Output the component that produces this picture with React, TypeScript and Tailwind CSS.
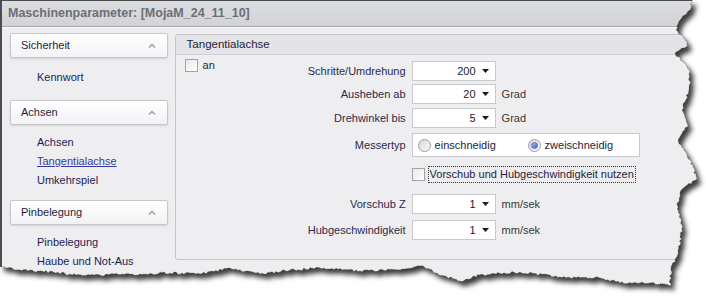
import React from 'react';

// torn paper edge, right side then bottom
const rightEdge: [number, number][] = [
  [692, 0], [690, 10], [680, 20], [676, 30], [688, 42], [686, 47], [675, 53], [684, 63], [690, 72],
  [689, 90], [682, 110], [688, 125], [678, 140], [690, 160], [697, 178], [680, 192], [677, 205],
  [682, 225], [680, 245], [676, 258], [671, 268], [670, 286],
];
const bottomEdge: [number, number][] = [
  [650, 283], [620, 283], [600, 278], [560, 277], [520, 272], [480, 275], [460, 281], [445, 276],
  [420, 266], [400, 270], [360, 271], [320, 268], [290, 270], [260, 274], [230, 268], [200, 274],
  [170, 273], [140, 274], [100, 275], [70, 274], [40, 271], [20, 270], [0, 267],
];

function tornPath() {
  let seed = 7;
  const rnd = () => {
    seed = (seed * 16807) % 2147483647;
    return (seed / 2147483647) * 2 - 1;
  };
  const pts = [...rightEdge, ...bottomEdge];
  let d = 'M0 0 L692 0';
  for (let i = 1; i < pts.length; i++) {
    const [x0, y0] = pts[i - 1];
    const [x1, y1] = pts[i];
    const len = Math.hypot(x1 - x0, y1 - y0);
    const steps = Math.max(1, Math.round(len / 2));
    const nx = -(y1 - y0) / len;
    const ny = (x1 - x0) / len;
    for (let s = 1; s <= steps; s++) {
      const t = s / steps;
      const j = s === steps ? 0 : rnd() * 1.2;
      d += ` L${(x0 + (x1 - x0) * t + nx * j).toFixed(1)} ${(y0 + (y1 - y0) * t + ny * j).toFixed(1)}`;
    }
  }
  return d + ' Z';
}

function Caret() {
  return (
    <svg width="8" height="5" viewBox="0 0 8 5">
      <polyline points="1,4.5 4,1.5 7,4.5" fill="none" stroke="#9a9ba0" strokeWidth="1.3" />
    </svg>
  );
}

function NavHeader({ label }: { label: string }) {
  return (
    <div className="h-[25px] flex items-center justify-between pl-[10px] pr-[11px] bg-gradient-to-b from-white to-[#f3f3f6] border border-[#c6c7cc] rounded-[2px] shadow-[0_1px_2px_rgba(0,0,0,0.12)] text-[#1e1e3c]">
      <span>{label}</span>
      <Caret />
    </div>
  );
}

function NavItem({ label, active }: { label: string; active?: boolean }) {
  return (
    <div className={`h-[19px] flex items-center pl-[27px] ${active ? 'text-[#3838a0] underline' : 'text-[#1c1c54]'}`}>
      {label}
    </div>
  );
}

function Combo({ value }: { value: string }) {
  return (
    <div className="w-[84px] h-[20px] flex items-center bg-white border border-[#c8c9ce]">
      <span className="flex-1 text-right text-[#1a1a1a]">{value}</span>
      <span className="w-[19px] flex justify-center">
        <svg width="7" height="4" viewBox="0 0 7 4">
          <polygon points="0,0 7,0 3.5,4" fill="#1a1a1a" />
        </svg>
      </span>
    </div>
  );
}

function CheckBox() {
  return <span className="w-[13px] h-[13px] border border-[#a2a3a8] bg-gradient-to-br from-[#e8e8ea] to-white shrink-0" />;
}

function Radio({ checked }: { checked?: boolean }) {
  return (
    <span className="w-[13px] h-[13px] rounded-full border border-[#9c9da2] bg-gradient-to-br from-[#d6d7da] to-[#fbfbfc] flex items-center justify-center shrink-0">
      {checked && <span className="w-[7px] h-[7px] rounded-full bg-gradient-to-br from-[#a9c4f2] to-[#3b63c4] border border-[#4d6fb8]" />}
    </span>
  );
}

function Row({ label, mt, children }: { label: string; mt: string; children: React.ReactNode }) {
  return (
    <div className={`flex items-center ${mt}`}>
      <span className="w-[115px] pr-[6px] text-right text-[#2a2a4c]">{label}</span>
      {children}
    </div>
  );
}

export default function App() {
  const d = tornPath();
  return (
    <div className="relative w-[706px] h-[296px] bg-white overflow-hidden font-['Liberation_Sans',Arial,sans-serif] text-[11px]">
      <div className="w-[700px] h-[292px] flex flex-col bg-[#eeeef1] border-l-2 border-t border-[#4e4f52]">
        <div className="h-[26px] flex items-center pl-[6px] bg-gradient-to-b from-[#dcdde0] to-[#d2d3d7] border-b border-[#a6a7ac] text-[12.5px] font-bold text-[#6c6f75]">
          Maschinenparameter: [MojaM_24_11_10]
        </div>
        <div className="h-px bg-white/70" />
        <div className="flex pt-[5px]">
          <div className="w-[159px] ml-[8px]">
            <NavHeader label="Sicherheit" />
            <div className="pt-[10px] h-[42px]">
              <NavItem label="Kennwort" />
            </div>
            <NavHeader label="Achsen" />
            <div className="pt-[8px] h-[75px]">
              <NavItem label="Achsen" />
              <NavItem label="Tangentialachse" active />
              <NavItem label="Umkehrspiel" />
            </div>
            <NavHeader label="Pinbelegung" />
            <div className="pt-[8px]">
              <NavItem label="Pinbelegung" />
              <NavItem label="Haube und Not-Aus" />
            </div>
          </div>
          <div className="ml-[7px] w-[530px] h-[226px] mt-[1px] border border-[#c5c6cb] rounded-[3px] flex flex-col">
            <div className="h-[20px] flex items-center pl-[11px] bg-[#e3e4e8] border-b border-[#cfd0d4] text-[#1e1e3a] text-[11.5px]">
              Tangentialachse
            </div>
            <div className="flex pl-[9px]">
              <div className="w-[112px] pt-[4px] flex items-start gap-[5px] text-[#1e1e3a]">
                <CheckBox />
                <span className="leading-[13px]">an</span>
              </div>
              <div className="flex flex-col">
                <Row label="Schritte/Umdrehung" mt="mt-[6px]">
                  <Combo value="200" />
                </Row>
                <Row label="Ausheben ab" mt="mt-[3px]">
                  <Combo value="20" />
                  <span className="ml-[6px] text-[#3c3530]">Grad</span>
                </Row>
                <Row label="Drehwinkel bis" mt="mt-[4px]">
                  <Combo value="5" />
                  <span className="ml-[6px] text-[#3c3530]">Grad</span>
                </Row>
                <Row label="Messertyp" mt="mt-[5px]">
                  <div className="w-[228px] h-[24px] bg-white border border-[#c8c9ce] flex items-center pl-[5px] text-[#1e1e3a]">
                    <div className="w-[110px] flex items-center gap-[4px]">
                      <Radio />
                      <span>einschneidig</span>
                    </div>
                    <div className="flex items-center gap-[4px]">
                      <Radio checked />
                      <span>zweischneidig</span>
                    </div>
                  </div>
                </Row>
                <div className="flex items-center mt-[9px] pl-[115px] gap-[3px]">
                  <CheckBox />
                  <span className="h-[17px] flex items-center px-[1px] border border-dotted border-[#333] text-[#1e1e3a]">
                    Vorschub und Hubgeschwindigkeit nutzen
                  </span>
                </div>
                <Row label="Vorschub Z" mt="mt-[11px]">
                  <Combo value="1" />
                  <span className="ml-[6px] text-[#3c3530]">mm/sek</span>
                </Row>
                <Row label="Hubgeschwindigkeit" mt="mt-[6px]">
                  <Combo value="1" />
                  <span className="ml-[6px] text-[#3c3530]">mm/sek</span>
                </Row>
              </div>
            </div>
          </div>
        </div>
      </div>
      <svg className="absolute inset-0" width="706" height="296">
        <defs>
          <filter id="sh" x="-5%" y="-5%" width="110%" height="110%">
            <feGaussianBlur stdDeviation="2.4" />
          </filter>
          <mask id="outside">
            <rect width="706" height="296" fill="white" />
            <path d={d} fill="black" />
          </mask>
        </defs>
        <g mask="url(#outside)">
          <rect width="706" height="296" fill="white" />
          <path d={d} transform="translate(4,5)" fill="#3e3e3e" filter="url(#sh)" />
        </g>
        <path d={d} fill="none" stroke="#3a3a3a" strokeWidth="0.5" strokeDasharray="1 1" />
      </svg>
    </div>
  );
}
